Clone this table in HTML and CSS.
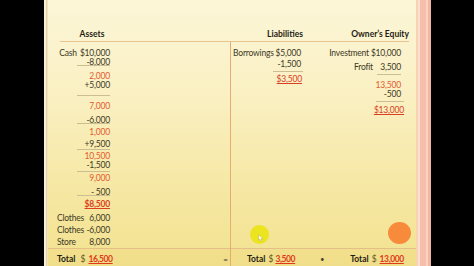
FILE: index.html
```html
<!DOCTYPE html>
<html>
<head>
<meta charset="utf-8">
<link rel="stylesheet" href="styles.css">
</head>
<body>
<div class="screen">
  <div class="pillar-l"></div>
  <div class="slide">
    <div class="edge-left"></div>
    <div class="main">
      <div class="head">
        <div class="h h-assets">Assets</div>
        <div class="h h-liab">Liabilities</div>
        <div class="h h-eq">Owner’s Equity</div>
      </div>
      <div class="cols">
        <div class="col-assets">
          <div class="ledger assets">
            <div class="r pair g5"><span>Cash</span><span>$10,000</span></div>
            <div class="r">-8,000</div>
            <div class="rule w33"></div>
            <div class="r red g4">2,000</div>
            <div class="r">+5,000</div>
            <div class="rule w33 g7"></div>
            <div class="r red g4">7,000</div>
            <div class="r g5">-6,000</div>
            <div class="rule w33"></div>
            <div class="r red g2">1,000</div>
            <div class="r g3">+9,500</div>
            <div class="rule w33 g2"></div>
            <div class="r red">10,500</div>
            <div class="r">-1,500</div>
            <div class="rule w33 g3"></div>
            <div class="r red">9,000</div>
            <div class="r g5">- 500</div>
            <div class="rule w33"></div>
            <div class="r sum bold g2">$8,500</div>
            <div class="r lab g5"><span>Clothes</span><span>6,000</span></div>
            <div class="r lab g3"><span>Clothes</span><span>-6,000</span></div>
            <div class="r lab g3"><span>Store</span><span>8,000</span></div>
          </div>
          <div class="total total-a">
            <span class="t-lbl">Total</span>
            <span class="t-cur wide">$</span>
            <span class="t-val">16,500</span>
            <span class="eq-sign">=</span>
          </div>
        </div>
        <div class="col-right">
          <div class="right-body">
            <div class="ledger liab">
              <div class="r g5">Borrowings $5,000</div>
              <div class="r g2">-1,500</div>
              <div class="rule w30 g4 flush"></div>
              <div class="r sum g1 out1">$3,500</div>
            </div>
            <div class="ledger equity">
              <div class="r g5">Investment $10,000</div>
              <div class="r lab g5 frofit"><span>Frofit</span><span>3,500</span></div>
              <div class="rule w24 g4"></div>
              <div class="r red g4">13,500</div>
              <div class="r">-500</div>
              <div class="rule w28 g4 out3"></div>
              <div class="r sum g2 out3">$13,000</div>
            </div>
          </div>
          <div class="total total-r">
            <div class="tgroup">
              <span class="t-lbl">Total</span>
              <span class="t-cur">$</span>
              <span class="t-val tight">3,500</span>
            </div>
            <span class="dot">•</span>
            <div class="tgroup tg-eq">
              <span class="t-lbl">Total</span>
              <span class="t-cur">$</span>
              <span class="t-val">13,000</span>
            </div>
          </div>
        </div>
      </div>
    </div>
    <div class="edge-right"></div>
    <div class="spot">
      <svg class="cursor" width="6" height="8" viewBox="0 0 6 8"><path d="M0.5 0.5 L0.5 6.5 L2 5.2 L3.2 7.6 L4.2 7.1 L3 4.8 L5.2 4.8 Z" fill="#fffbe6" stroke="#b9b040" stroke-width="0.5"/></svg>
    </div>
    <div class="blob"></div>
  </div>
  <div class="pillar-r"></div>
</div>
</body>
</html>
```

FILE: styles.css
```css
html, body { margin: 0; padding: 0; background: #000; }

.screen {
  display: flex;
  width: 474px;
  height: 266px;
  overflow: hidden;
  font-family: Lato, "Open Sans", sans-serif;
  font-size: 8.5px;
  color: #3d3926;
}

.pillar-l { width: 44px; background: #000; }
.pillar-r { flex: 1; background: #000; }

.slide {
  position: relative;
  width: 387px;
  display: flex;
  background: linear-gradient(180deg, #fcf6d8 0%, #faf0c3 35%, #f6e8a4 70%, #f2e290 100%);
}

.edge-left {
  width: 4px;
  background: linear-gradient(90deg, #f7f0d6 0 2px, #e2d2a6 2px 3px, #efe5c2 3px);
}

.edge-right {
  width: 15px;
  background: linear-gradient(90deg, #f8d2b6 0 2px, #fbe1cb 2px 4px, #f6bfac 4px 10px, #f9d3c2 10px 12px, #f3b6a3 12px);
}

.main {
  width: 368px;
  display: flex;
  flex-direction: column;
}

.head {
  height: 42px;
  box-sizing: border-box;
  margin: 0 7px 0 12px;
  padding-bottom: 2px;
  border-bottom: 1px solid #e6c58f;
  display: flex;
  align-items: flex-end;
}

.h {
  font-weight: 700;
  color: #1f1d12;
  line-height: 10px;
  white-space: nowrap;
}
.h-assets { width: 64px; text-align: center; }
.h-liab { width: 179px; text-align: right; }
.h-eq { flex: 1; text-align: right; }

.cols { flex: 1; display: flex; }

.col-assets {
  width: 182px;
  display: flex;
  flex-direction: column;
}

.col-right {
  flex: 1;
  border-left: 1px solid #e5ae70;
  display: flex;
  flex-direction: column;
}

.right-body { flex: 1; display: flex; }

.ledger {
  flex: 1;
  display: flex;
  flex-direction: column;
  letter-spacing: -0.2px;
}
.ledger.assets { flex: 1 1 auto; width: 53px; margin-left: 9px; align-self: flex-start; }
.ledger.liab { flex: none; width: 70px; padding-right: 2px; }
.ledger.equity { flex: 1; padding-right: 15px; }

.r {
  height: 9px;
  line-height: 13px;
  display: flex;
  justify-content: flex-end;
  white-space: nowrap;
}
.r.lab { justify-content: space-between; }
.r.pair { gap: 3px; }
.frofit { padding-left: 51px; }

.red { color: #e25a32; }
.sum { color: #d9401f; text-decoration: underline; text-underline-offset: 1px; }
.bold { font-weight: 700; }

.rule { height: 1px; flex: none; background: #cdbd92; align-self: flex-end; }
.w33 { width: 33px; }
.w30 { width: 30px; }
.w24 { width: 24px; }
.w28 { width: 28px; }
.flush { margin-right: -2px; }
.out1 { margin-right: -1px; }
.out3 { margin-right: -3px; }

.g1 { margin-top: 1px; }
.g2 { margin-top: 2px; }
.g3 { margin-top: 3px; }
.g4 { margin-top: 4px; }
.g5 { margin-top: 5px; }
.g7 { margin-top: 7px; }

.total {
  height: 18px;
  box-sizing: border-box;
  border-top: 1px solid #e4bf88;
  display: flex;
  align-items: baseline;
  padding-top: 5px;
  line-height: 10px;
  background: rgba(236, 206, 110, 0.18);
  white-space: nowrap;
}
.total-a { padding-left: 9px; padding-right: 2px; }
.total-r { padding-left: 16px; }

.tgroup { display: flex; align-items: baseline; }
.t-lbl { font-weight: 700; color: #1f1d12; }
.t-cur { margin-left: 3px; color: #5e5426; }
.t-cur.wide { margin-left: 5px; }
.t-val { margin-left: 3px; color: #e0391a; font-weight: 700; letter-spacing: -0.4px; text-decoration: underline; text-underline-offset: 1px; }
.t-val.tight { margin-left: 2px; }
.eq-sign { margin-left: auto; color: #3d3a28; font-size: 8px; }
.dot { margin-left: 25px; font-size: 7px; color: #3d3a28; }
.tg-eq { margin-left: 26px; }

.spot {
  position: absolute;
  left: 206px;
  top: 225px;
  width: 19px;
  height: 19px;
  border-radius: 50%;
  background: radial-gradient(circle, #ece41f 0 60%, #e9e12a 75%, rgba(233, 225, 42, 0.5) 100%);
}
.cursor { position: absolute; left: 8px; top: 9px; }

.blob {
  position: absolute;
  left: 344px;
  top: 222px;
  width: 23px;
  height: 22px;
  border-radius: 50%;
  background: #f78a3b;
}
```
